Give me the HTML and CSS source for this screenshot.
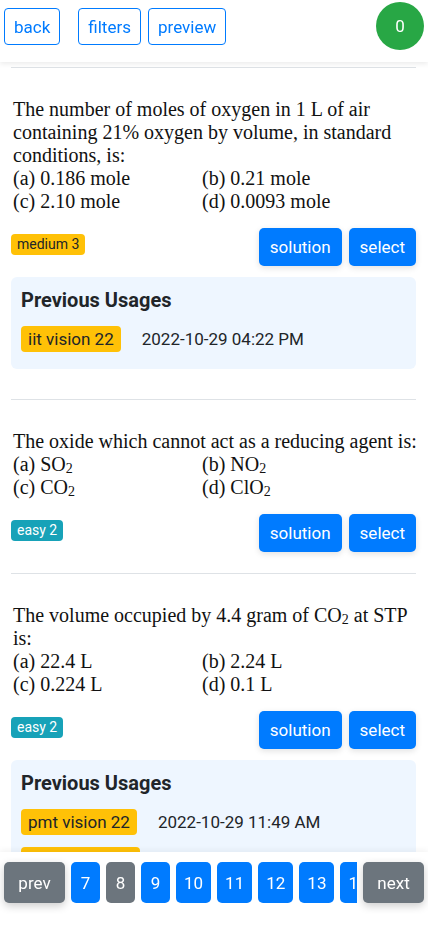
FILE: index.html
```html
<!DOCTYPE html>
<html lang="en">
<head>
  <meta charset="UTF-8" />
  <meta name="viewport" content="width=device-width, initial-scale=1.0"/>
  <title>Question Bank</title>
  <link rel="stylesheet" href="styles.css">
</head>
<body>

  <header class="topbar">
    <button class="btn-outline">back</button>
    <button class="btn-outline gap-left">filters</button>
    <button class="btn-outline">preview</button>
    <div class="counter">0</div>
  </header>

  <main class="list">
    <hr class="sep first">
    <div class="question">
      <p class="q-text">The number of moles of oxygen in 1 L of air<br>containing 21% oxygen by volume, in standard<br>conditions, is:</p>
      <div class="options">
        <span>(a) 0.186 mole</span><span>(b) 0.21 mole</span>
        <span>(c) 2.10 mole</span><span>(d) 0.0093 mole</span>
      </div>
      <div class="actions">
        <span class="tag tag-warning">medium 3</span>
        <div class="action-btns">
          <button class="btn-primary">solution</button>
          <button class="btn-primary">select</button>
        </div>
      </div>
      <div class="usages">
        <h3>Previous Usages</h3>
        <div class="usage-row">
          <span class="usage-tag">iit vision 22</span>
          <span class="usage-date">2022-10-29 04:22 PM</span>
        </div>
      </div>
    </div>

    <hr class="sep">
    <div class="question">
      <p class="q-text">The oxide which cannot act as a reducing agent is:</p>
      <div class="options">
        <span>(a) SO<sub>2</sub></span><span>(b) NO<sub>2</sub></span>
        <span>(c) CO<sub>2</sub></span><span>(d) ClO<sub>2</sub></span>
      </div>
      <div class="actions">
        <span class="tag tag-info">easy 2</span>
        <div class="action-btns">
          <button class="btn-primary">solution</button>
          <button class="btn-primary">select</button>
        </div>
      </div>
    </div>

    <hr class="sep">
    <div class="question">
      <p class="q-text">The volume occupied by 4.4 gram of CO<sub>2</sub> at STP<br>is:</p>
      <div class="options">
        <span>(a) 22.4 L</span><span>(b) 2.24 L</span>
        <span>(c) 0.224 L</span><span>(d) 0.1 L</span>
      </div>
      <div class="actions">
        <span class="tag tag-info">easy 2</span>
        <div class="action-btns">
          <button class="btn-primary">solution</button>
          <button class="btn-primary">select</button>
        </div>
      </div>
      <div class="usages">
        <h3>Previous Usages</h3>
        <div class="usage-row">
          <span class="usage-tag">pmt vision 22</span>
          <span class="usage-date">2022-10-29 11:49 AM</span>
        </div>
        <div class="usage-row">
          <span class="usage-tag">neet vision 22</span>
          <span class="usage-date">2022-10-28 10:15 AM</span>
        </div>
      </div>
    </div>
  </main>

  <nav class="pager">
    <button class="btn-secondary pager-end">prev</button>
    <div class="pages">
      <button class="btn-primary page">7</button>
      <button class="btn-secondary page">8</button>
      <button class="btn-primary page">9</button>
      <button class="btn-primary page">10</button>
      <button class="btn-primary page">11</button>
      <button class="btn-primary page">12</button>
      <button class="btn-primary page">13</button>
      <button class="btn-primary page">14</button>
    </div>
    <button class="btn-secondary pager-end">next</button>
  </nav>

</body>
</html>
```

FILE: styles.css
```css
body { margin: 0; font-family: Roboto, "Open Sans", sans-serif; color: #212529; background: #fff; }
button { font-family: inherit; cursor: pointer; }

.topbar { position: fixed; top: 0; left: 0; right: 0; height: 62px; background: #fff; display: flex; align-items: flex-start; padding: 8px 4px 0; box-sizing: border-box; box-shadow: 0 2px 5px rgba(0,0,0,0.08); z-index: 10; }
.btn-outline { height: 37px; padding: 0 9px; margin-right: 7px; font-size: 17px; color: #007bff; background: #fff; border: 1px solid #007bff; border-radius: 4px; }
.gap-left { margin-left: 11px; }
.counter { margin-left: auto; margin-top: -6px; width: 48px; height: 48px; border-radius: 50%; background: #28a745; color: #fff; font-size: 17px; display: flex; align-items: center; justify-content: center; }

.list { padding: 62px 12px 90px 11px; }
.sep { border: 0; border-top: 1px solid #dee2e6; margin: 21px 0 0; }
.sep.first { margin-top: 5px; }

.question { padding-top: 30px; }
.q-text { margin: 0 0 0 2px; font-family: "Liberation Serif", "Times New Roman", serif; font-size: 20px; line-height: 23px; white-space: nowrap; color: #111; }
.options { display: grid; grid-template-columns: 189px 1fr; margin-left: 2px; font-family: "Liberation Serif", "Times New Roman", serif; font-size: 20px; line-height: 23px; white-space: nowrap; color: #111; }
sub { font-size: 0.7em; vertical-align: -0.15em; line-height: 0; }

.actions { display: flex; justify-content: space-between; align-items: flex-start; margin-top: 15px; }
.tag { margin-top: 6px; font-size: 14px; line-height: 17px; padding: 2px 6px; border-radius: 4px; }
.tag-warning { background: #ffc107; color: #212529; }
.tag-info { background: #17a2b8; color: #fff; }
.action-btns { display: flex; gap: 7px; }
.btn-primary { height: 38px; padding: 0 11px; font-size: 17px; color: #fff; background: #007bff; border: 0; border-radius: 5px; box-shadow: 0 2px 6px rgba(0,0,0,0.12); }
.btn-secondary { color: #fff; background: #6c757d; border: 0; border-radius: 5px; font-size: 17px; }

.usages { margin: 11px 0 30px; padding: 11px 10px 17px; background: #eef6ff; border-radius: 6px; }
.usages h3 { margin: 0 0 14px; font-size: 20px; line-height: 24px; font-weight: 700; color: #212529; }
.usage-row { display: flex; align-items: center; margin-bottom: 12px; }
.usage-row:last-child { margin-bottom: 0; }
.usage-tag { font-size: 17px; line-height: 22px; padding: 2px 7px; background: #ffc107; border-radius: 4px; color: #212529; }
.usage-date { margin-left: 21px; font-size: 17px; color: #212529; }

.pager { position: fixed; left: 0; right: 0; bottom: 0; height: 74px; background: #fff; display: flex; align-items: flex-start; padding: 10px 4px 0; box-sizing: border-box; box-shadow: 0 -2px 6px rgba(0,0,0,0.05); z-index: 10; }
.pager-end { height: 41px; width: 61px; flex-shrink: 0; box-shadow: 0 3px 8px rgba(0,0,0,0.2); }
.pages { flex: 1; display: flex; gap: 6px; overflow: hidden; margin: 0 6px; }
.page { height: 41px; min-width: 29px; padding: 0 8px; flex-shrink: 0; box-shadow: none; font-size: 17px; }
```
